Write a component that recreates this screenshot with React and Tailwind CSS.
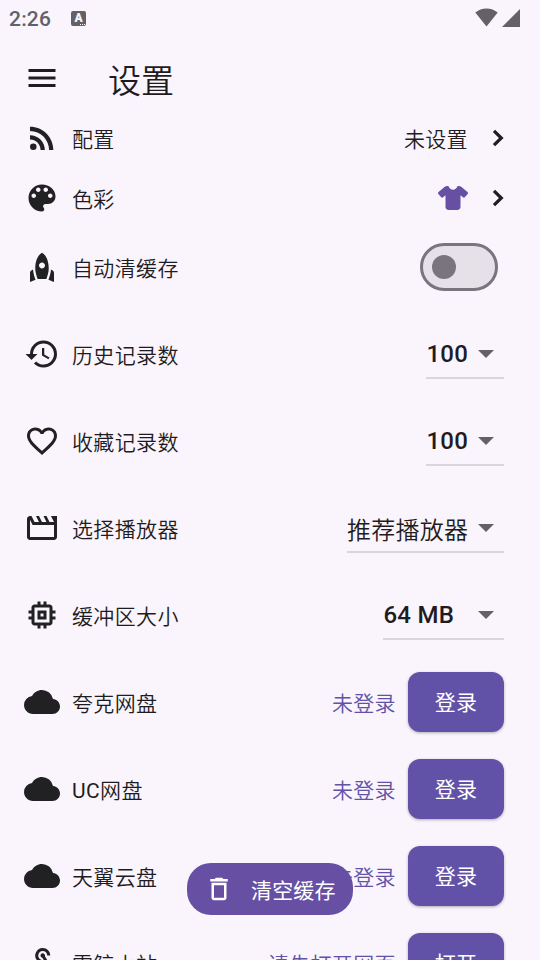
import {
  MdMenu,
  MdRssFeed,
  MdRocket,
  MdHistory,
  MdFavoriteBorder,
  MdOutlineMovieCreation,
  MdMemory,
  MdCloud,
  MdWebhook,
  MdDeleteOutline,
} from 'react-icons/md';
import { FaShirt } from 'react-icons/fa6';

const accounts = [
  { name: '夸克网盘', icon: MdCloud, status: '未登录', action: '登录' },
  { name: <><span className="font-normal">UC</span>网盘</>, icon: MdCloud, status: '未登录', action: '登录' },
  { name: '天翼云盘', icon: MdCloud, status: '未登录', action: '登录' },
  { name: '雷鲸小站', icon: MdWebhook, status: '请先打开网页', action: '打开' },
];

const selects = [
  { name: '历史记录数', icon: MdHistory, value: '100', width: 'w-[78px]', text: 'pl-[0.5px] font-medium' },
  { name: '收藏记录数', icon: MdFavoriteBorder, value: '100', width: 'w-[78px]', text: 'pl-[0.5px] font-medium' },
  { name: '选择播放器', icon: MdOutlineMovieCreation, value: '推荐播放器', width: 'w-[157px]', text: 'pt-[7px]' },
  { name: '缓冲区大小', icon: MdMemory, value: '64 MB', width: 'w-[121px]', text: 'pl-[0.5px] font-medium' },
];

function StatusBar() {
  return (
    <div className="flex h-9 items-center justify-between pl-[9px] pr-5 text-[#646166]">
      <div className="flex items-center gap-5">
        <span className="text-[21px] font-medium leading-9 pt-[2px] tracking-[0.2px]">2:26</span>
        <span className="relative flex size-[15px] items-center justify-center rounded-[2px] bg-[#646166]">
          <span className="pb-px text-[12px] font-black leading-none tracking-normal text-[#faf4fc]">A</span>
          <span className="absolute bottom-px right-px flex gap-px">
            <i className="size-px bg-[#faf4fc]" />
            <i className="size-px bg-[#faf4fc]" />
            <i className="size-px bg-[#faf4fc]" />
          </span>
        </span>
      </div>
      <div className="flex items-center gap-1">
        <svg width="23" height="19" viewBox="0 0 23 19" fill="currentColor" className="relative -top-px">
          <path d="M11.5 18.5 0.3 4.6C3.3 1.9 7.2 0.4 11.5 0.4S19.7 1.9 22.7 4.6Z" />
        </svg>
        <svg width="18" height="18" viewBox="0 0 18 18" fill="currentColor">
          <path d="M18 0v18H0Z" />
        </svg>
      </div>
    </div>
  );
}

function PaletteIcon({ size, className }) {
  return (
    <svg width={size} height={size} viewBox="0 0 24 24" fill="currentColor" className={className}>
      <path d="M12 3c-4.97 0-9 4.03-9 9s4.03 9 9 9c.83 0 1.5-.67 1.5-1.5 0-.39-.15-.74-.39-1.01-.23-.26-.38-.61-.38-.99 0-.83.67-1.5 1.5-1.5H16c2.76 0 5-2.24 5-5 0-4.42-4.03-8-9-8zm-5.5 9c-.83 0-1.5-.67-1.5-1.5S5.67 9 6.5 9 8 9.67 8 10.5 7.33 12 6.5 12zm3-4C8.67 8 8 7.33 8 6.5S8.67 5 9.5 5s1.5.67 1.5 1.5S10.33 8 9.5 8zm5 0c-.83 0-1.5-.67-1.5-1.5S13.67 5 14.5 5s1.5.67 1.5 1.5S15.33 8 14.5 8zm3 4c-.83 0-1.5-.67-1.5-1.5S16.67 9 17.5 9s1.5.67 1.5 1.5-.67 1.5-1.5 1.5z" />
    </svg>
  );
}

function Chevron() {
  return (
    <svg width="12" height="18" viewBox="0 0 12 18" fill="none" stroke="#1f1c21" strokeWidth="3.2">
      <path d="M2 1.8 9.3 9 2 16.2" strokeLinejoin="miter" />
    </svg>
  );
}

function Row({ icon: Icon, name, height, labelClass = 'pt-[5px]', children }) {
  return (
    <div className={`flex shrink-0 items-center pl-6 pr-9 ${height}`}>
      <Icon size={36} className="shrink-0 text-[#212022]" />
      <span className={`ml-3 ${labelClass}`}>{name}</span>
      <div className="ml-auto flex items-center">{children}</div>
    </div>
  );
}

function Select({ value, width, text }) {
  return (
    <div className="pt-[2px]">
      <div className={`flex h-12 items-center justify-between border-b-2 border-[#dad5dc] pr-[10px] text-2xl tracking-[0.225px] ${width}`}>
        <span className={`whitespace-nowrap ${text}`}>{value}</span>
        <svg width="16" height="8" viewBox="0 0 16 8" className="mt-px shrink-0">
          <path d="M0 0h16L8 8Z" fill="#646166" />
        </svg>
      </div>
    </div>
  );
}

export default function App() {
  return (
    <div className="relative flex h-[960px] w-[540px] flex-col overflow-hidden bg-[#faf4fc] font-[Roboto,'Noto_Sans_CJK_SC',sans-serif] text-[21px] font-[350] tracking-[0.375px] text-[#1f1c21]">
      <StatusBar />

      <header className="flex h-[72px] shrink-0 items-center pb-1 pl-6 pt-4">
        <MdMenu size={36} />
        <h1 className="ml-12 pt-[6px] text-[33px] leading-none tracking-normal">设置</h1>
      </header>

      <Row icon={MdRssFeed} name="配置" height="h-[60px]">
        <span className="mr-6 pt-[5px]">未设置</span>
        <Chevron />
      </Row>
      <Row icon={PaletteIcon} name="色彩" height="h-[60px]">
        <FaShirt className="mr-6 h-6 w-[30px] text-[#6750a4]" />
        <Chevron />
      </Row>
      <Row icon={MdRocket} name="自动清缓存" height="h-[78px]">
        <div className="mr-1.5 flex h-12 w-[78px] items-center rounded-full border-[3px] border-[#79747e] bg-[#e6e0e9] pl-[9px]">
          <div className="size-6 rounded-full bg-[#79747e]" />
        </div>
      </Row>

      <div className="mt-1 flex flex-col">
        {selects.map((item) => (
          <Row key={item.name} icon={item.icon} name={item.name} height="h-[87px]" labelClass="pt-[7px]">
            <Select value={item.value} width={item.width} text={item.text} />
          </Row>
        ))}
        {accounts.map((item, i) => (
          <Row key={i} icon={item.icon} name={item.name} height="h-[87px]" labelClass="pt-[7px]">
            <span className="mr-3 pt-[7px] text-[#6252a7]">{item.status}</span>
            <button className="h-[60px] w-24 rounded-xl bg-[#6252a7] pt-[5px] font-normal tracking-[0.15px] text-white shadow-[0_1px_3px_rgba(0,0,0,0.3)]">
              {item.action}
            </button>
          </Row>
        ))}
      </div>

      {/* Floating action button */}
      <button className="absolute left-[187px] top-[863px] flex h-[52px] w-[166px] items-center rounded-3xl bg-[#6750a4] pl-[17px] font-normal text-white">
        <MdDeleteOutline size={30} />
        <span className="ml-[17px] pt-[5px] tracking-[0.15px]">清空缓存</span>
      </button>
    </div>
  );
}
